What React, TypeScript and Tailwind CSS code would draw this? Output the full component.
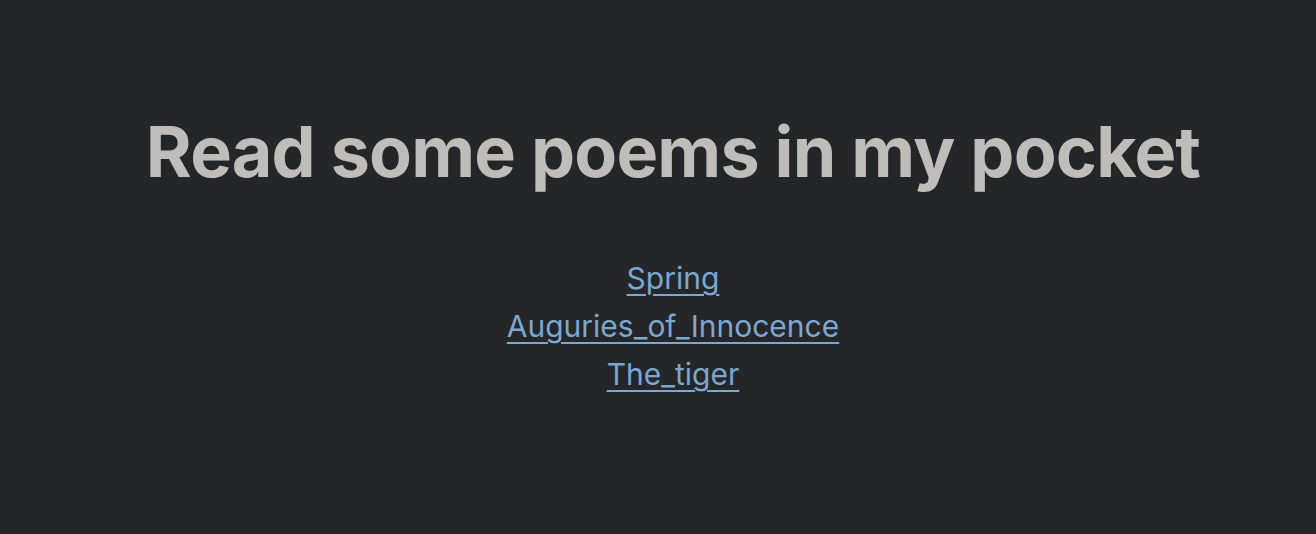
const poems = ['Spring', 'Auguries_of_Innocence', 'The_tiger']

export default function App() {
  return (
    <div className="min-h-[534px] bg-[#252628] flex flex-col items-center pl-[30px]" style={{ fontFamily: 'Inter, "Noto Sans", sans-serif' }}>
      <h1 className="mt-[110px] text-[70px] leading-[84px] font-bold text-[#bfbdb9] tracking-[-0.8px]">
        Read some poems in my pocket
      </h1>
      <ul className="mt-[60px] flex flex-col items-center">
        {poems.map(p => (
          <li key={p} className="text-[30px] leading-[48px]">
            <a href="#" className="text-[#7ba7d3] underline decoration-2 underline-offset-[5px]">{p}</a>
          </li>
        ))}
      </ul>
    </div>
  )
}
